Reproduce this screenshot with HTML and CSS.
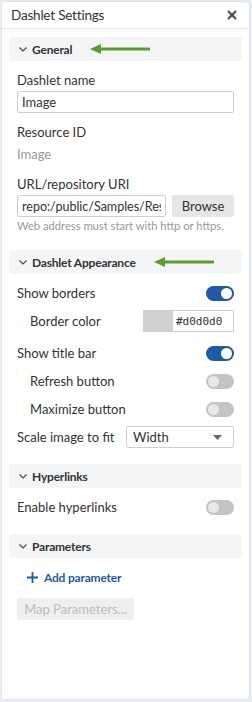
FILE: index.html
```html
<!DOCTYPE html>
<html lang="en">
  <head>
    <meta charset="UTF-8" />
    <title>Dashlet Settings</title>
    <link rel="stylesheet" href="styles.css">
  </head>
  <body>
    <div class="panel">
      <div class="panel-head">
        <span class="panel-title">Dashlet Settings</span>
        <svg class="close" width="10" height="10" viewBox="0 0 10 10"><path d="M1 1L9 9M9 1L1 9" stroke="#4d4d4d" stroke-width="2.2" fill="none"/></svg>
      </div>

      <div class="panel-body">
        <div class="section-head">
          <svg class="chev" width="8" height="5" viewBox="0 0 8 5"><path d="M0.5 0.5L4 4L7.5 0.5" stroke="#444" stroke-width="1.1" fill="none"/></svg>
          <span>General</span>
          <svg class="arrow arrow-general" width="60" height="10" viewBox="0 0 60 10"><path d="M8 5H59" stroke="#5b9e2e" stroke-width="3" stroke-linecap="round"/><path d="M0 5L11 0V10Z" fill="#5b9e2e"/></svg>
        </div>
        <div class="section-body">
          <div class="field">
            <div class="label">Dashlet name</div>
            <input class="text-input" type="text" value="Image" />
          </div>
          <div class="field">
            <div class="label">Resource ID</div>
            <div class="value">Image</div>
          </div>
          <div class="field">
            <div class="label">URL/repository URI</div>
            <div class="uri-row">
              <input class="text-input uri" type="text" value="repo:/public/Samples/Resources/Images" />
              <button class="browse">Browse</button>
            </div>
            <div class="hint">Web address must start with http or https.</div>
          </div>
        </div>

        <div class="section-head">
          <svg class="chev" width="8" height="5" viewBox="0 0 8 5"><path d="M0.5 0.5L4 4L7.5 0.5" stroke="#444" stroke-width="1.1" fill="none"/></svg>
          <span>Dashlet Appearance</span>
          <svg class="arrow arrow-appearance" width="60" height="10" viewBox="0 0 60 10"><path d="M8 5H59" stroke="#5b9e2e" stroke-width="3" stroke-linecap="round"/><path d="M0 5L11 0V10Z" fill="#5b9e2e"/></svg>
        </div>
        <div class="section-body">
          <div class="row">
            <span>Show borders</span>
            <span class="toggle on"></span>
          </div>
          <div class="row sub group-end">
            <span>Border color</span>
            <div class="color-pick">
              <span class="swatch"></span>
              <input class="hex" type="text" value="#d0d0d0" />
            </div>
          </div>
          <div class="row">
            <span>Show title bar</span>
            <span class="toggle on"></span>
          </div>
          <div class="row sub">
            <span>Refresh button</span>
            <span class="toggle"></span>
          </div>
          <div class="row sub">
            <span>Maximize button</span>
            <span class="toggle"></span>
          </div>
          <div class="row">
            <span>Scale image to fit</span>
            <div class="select">
              <span>Width</span>
              <svg width="9" height="5" viewBox="0 0 9 5"><path d="M0 0H9L4.5 5Z" fill="#666"/></svg>
            </div>
          </div>
        </div>

        <div class="section-head">
          <svg class="chev" width="8" height="5" viewBox="0 0 8 5"><path d="M0.5 0.5L4 4L7.5 0.5" stroke="#444" stroke-width="1.1" fill="none"/></svg>
          <span>Hyperlinks</span>
        </div>
        <div class="section-body">
          <div class="row">
            <span>Enable hyperlinks</span>
            <span class="toggle"></span>
          </div>
        </div>

        <div class="section-head">
          <svg class="chev" width="8" height="5" viewBox="0 0 8 5"><path d="M0.5 0.5L4 4L7.5 0.5" stroke="#444" stroke-width="1.1" fill="none"/></svg>
          <span>Parameters</span>
        </div>
        <div class="section-body">
          <div class="add-link">
            <svg width="11" height="11" viewBox="0 0 11 11"><path d="M5.5 0V11M0 5.5H11" stroke="#1f5aa6" stroke-width="1.8"/></svg>
            <span>Add parameter</span>
          </div>
          <button class="map-btn" disabled>Map Parameters...</button>
        </div>
      </div>
    </div>
  </body>
</html>
```

FILE: styles.css
```css
body {
  margin: 0;
  background-color: #e9ecf3;
  font-family: Lato, "Noto Sans", sans-serif;
  font-size: 13px;
  color: #333;
}

.panel {
  margin: 1px 0 0 1px;
  width: 247px;
  height: 697px;
  background-color: white;
  border: 1px solid #dfe3ea;
  border-radius: 4px;
}

.panel-head {
  height: 26px;
  border-bottom: 1px solid #e2e5ea;
  display: flex;
  align-items: center;
  justify-content: space-between;
  padding: 0 12px 0 9px;
}

.panel-title {
  font-size: 13.5px;
  letter-spacing: -0.2px;
  color: #333;
}

.panel-body {
  padding: 8px 7px 0 7px;
}

.section-head {
  height: 24px;
  background-color: #f4f5f7;
  border-radius: 3px;
  display: flex;
  align-items: center;
  padding-left: 10px;
  font-weight: bold;
  font-size: 12px;
  letter-spacing: -0.2px;
  color: #333;
}

.chev {
  margin-right: 5px;
}

.arrow-general {
  margin-left: 18px;
}

.arrow-appearance {
  margin-left: 18px;
}

.section-body {
  padding: 8px 8px 16px 8px;
}

.field {
  margin-bottom: 8px;
}

.field:last-child {
  margin-bottom: 0;
}

.label,
.value {
  line-height: 22px;
}

.value {
  color: #999;
}

.text-input {
  display: block;
  width: 100%;
  height: 22px;
  box-sizing: border-box;
  border: 1px solid #cfcfcf;
  border-radius: 2px;
  padding: 0 4px;
  font-family: Lato, "Noto Sans", sans-serif;
  font-size: 13px;
  color: #333;
  margin: 0;
}

.uri-row {
  display: flex;
  gap: 6px;
}

.uri {
  flex: 1;
  min-width: 0;
  font-size: 12.5px;
}

.browse {
  width: 62px;
  height: 22px;
  border: none;
  border-radius: 2px;
  background-color: #e6e6e6;
  font-family: Lato, "Noto Sans", sans-serif;
  font-size: 13px;
  color: #333;
  padding: 0;
}

.hint {
  font-size: 11.2px;
  color: #999;
  line-height: 16px;
  margin-top: 1px;
}

.row {
  display: flex;
  align-items: center;
  justify-content: space-between;
  height: 22px;
  margin-bottom: 6px;
}

.row:last-child {
  margin-bottom: 0;
}

.row.sub {
  padding-left: 13px;
}

.row.group-end {
  margin-bottom: 10px;
}

.toggle {
  width: 28px;
  height: 15px;
  border-radius: 8px;
  background-color: #c4c4c4;
  position: relative;
}

.toggle::after {
  content: "";
  position: absolute;
  top: 2px;
  left: 2px;
  width: 11px;
  height: 11px;
  border-radius: 50%;
  background-color: #e8e8e8;
}

.toggle.on {
  background-color: #1f5aa6;
}

.toggle.on::after {
  left: 15px;
  background-color: white;
}

.color-pick {
  display: flex;
  height: 22px;
}

.swatch {
  width: 30px;
  background-color: #d0d0d0;
}

.hex {
  width: 61px;
  height: 22px;
  box-sizing: border-box;
  border: 1px solid #cfcfcf;
  border-left: none;
  padding: 0 3px;
  font-family: "DejaVu Sans Mono", monospace;
  font-size: 11px;
  color: #333;
  margin: 0;
}

.select {
  width: 108px;
  height: 22px;
  box-sizing: border-box;
  border: 1px solid #cfcfcf;
  border-radius: 2px;
  display: flex;
  align-items: center;
  justify-content: space-between;
  padding: 0 11px 0 6px;
}

.add-link {
  display: flex;
  align-items: center;
  gap: 6px;
  height: 22px;
  padding-left: 10px;
  color: #1f5aa6;
  font-weight: bold;
  font-size: 12px;
  letter-spacing: -0.2px;
}

.map-btn {
  margin-top: 10px;
  width: 117px;
  height: 22px;
  border: none;
  border-radius: 2px;
  background-color: #efefef;
  color: #bdbdbd;
  font-family: Lato, "Noto Sans", sans-serif;
  font-size: 13px;
  padding: 0;
}
```
